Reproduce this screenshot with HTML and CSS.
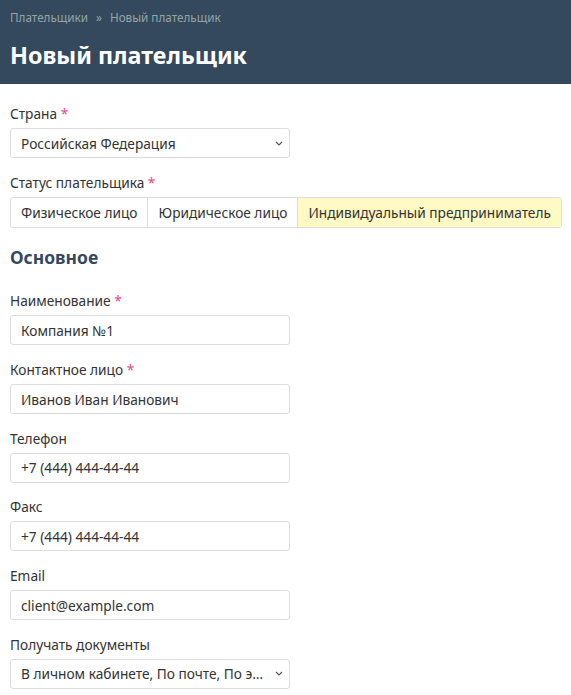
FILE: index.html
```html
<!DOCTYPE html>
<html lang="ru">
<head>
<meta charset="utf-8">
<link rel="stylesheet" href="styles.css">
</head>
<body>
<header class="page-header">
  <nav class="crumbs"><span>Плательщики</span><span class="sep">»</span><span>Новый плательщик</span></nav>
  <h1 class="title">Новый плательщик</h1>
</header>
<main class="content">
  <div class="field">
    <label class="label">Страна <span class="req">*</span></label>
    <div class="select"><span class="select-text">Российская Федерация</span><svg class="chev" width="8" height="5" viewBox="0 0 8 5"><path d="M1 1l3 3 3-3" fill="none" stroke="#555" stroke-width="1.1"/></svg></div>
  </div>
  <div class="field">
    <label class="label">Статус плательщика <span class="req">*</span></label>
    <div class="btn-group">
      <span class="seg">Физическое лицо</span>
      <span class="seg">Юридическое лицо</span>
      <span class="seg active">Индивидуальный предприниматель</span>
    </div>
  </div>
  <h2 class="section">Основное</h2>
  <div class="field">
    <label class="label">Наименование <span class="req">*</span></label>
    <div class="input">Компания №1</div>
  </div>
  <div class="field">
    <label class="label">Контактное лицо <span class="req">*</span></label>
    <div class="input">Иванов Иван Иванович</div>
  </div>
  <div class="field">
    <label class="label">Телефон</label>
    <div class="input">+7 (444) 444-44-44</div>
  </div>
  <div class="field">
    <label class="label">Факс</label>
    <div class="input">+7 (444) 444-44-44</div>
  </div>
  <div class="field">
    <label class="label">Email</label>
    <div class="input">client@example.com</div>
  </div>
  <div class="field">
    <label class="label">Получать документы</label>
    <div class="select"><span class="select-text">В личном кабинете, По почте, По электронной почте</span><svg class="chev" width="8" height="5" viewBox="0 0 8 5"><path d="M1 1l3 3 3-3" fill="none" stroke="#555" stroke-width="1.1"/></svg></div>
  </div>
</main>
</body>
</html>
```
FILE: styles.css
```css
* { box-sizing: border-box; }
html, body { margin: 0; padding: 0; }
body {
  font-family: "Noto Sans", "Open Sans", sans-serif;
  font-size: 13.7px;
  color: #333;
  background: #fff;
}
.page-header {
  background: #34495e;
  height: 84px;
  padding: 8px 10px 0;
}
.crumbs {
  font-size: 11.7px;
  line-height: 18px;
  color: #95a5a6;
  display: flex;
  gap: 8px;
}
.title {
  margin: 14px 0 0;
  font-size: 23.3px;
  line-height: 30px;
  font-weight: 700;
  color: #fff;
}
.content {
  padding: 20px 10px 0;
}
.field {
  margin-bottom: 14.7px;
}
.label {
  display: block;
  font-size: 13.7px;
  line-height: 20px;
  margin-bottom: 4px;
  color: #333;
}
.req { color: #e8458b; }
.select, .input {
  width: 280px;
  height: 30px;
  border: 1px solid #ddd;
  border-radius: 3px;
  padding: 0 10px;
  display: flex;
  align-items: center;
  font-size: 13.7px;
  color: #333;
}
.select { justify-content: space-between; gap: 6px; padding-right: 6px; }
.select-text { white-space: nowrap; overflow: hidden; text-overflow: ellipsis; }
.chev { flex: none; }
.btn-group {
  display: inline-flex;
  border: 1px solid #ddd;
  border-radius: 3px;
  height: 31px;
  white-space: nowrap;
}
.seg {
  display: flex;
  align-items: center;
  padding: 0 10px;
  border-left: 1px solid #ddd;
  white-space: nowrap;
}
.seg:first-child { border-left: 0; }
.seg.active { background: #fff9c4; border-radius: 0 2px 2px 0; }
.section {
  margin: 0 0 22px;
  padding-top: 3px;
  font-size: 17.5px;
  line-height: 24px;
  font-weight: 700;
  color: #34495e;
}
```
